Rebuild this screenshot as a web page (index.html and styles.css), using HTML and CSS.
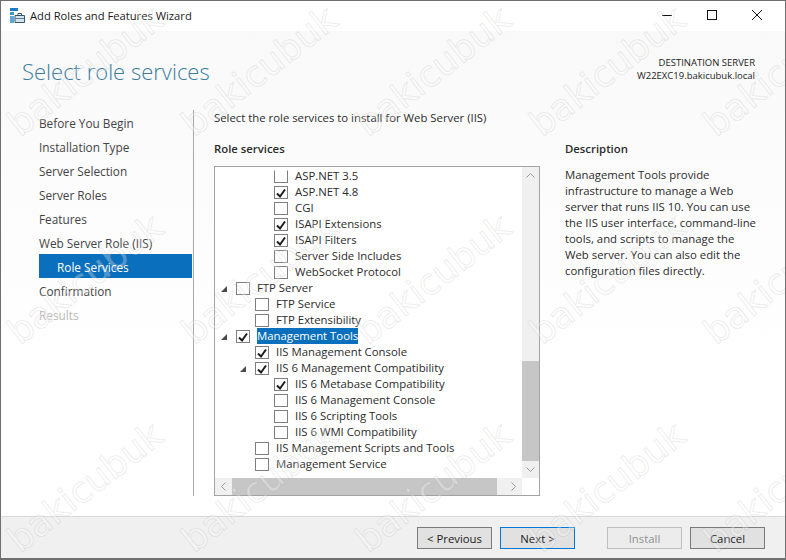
FILE: index.html
```html
<!DOCTYPE html>
<html lang="en">
<head>
<meta charset="utf-8">
<title>Add Roles and Features Wizard</title>
<link rel="stylesheet" href="styles.css">
</head>
<body>
<div class="window">
  <header class="titlebar">
    <svg class="app-icon" width="15" height="15" viewBox="0 0 15 15">
      <rect x="0" y="0" width="8" height="3" fill="#1b7cc4"/>
      <rect x="0" y="4" width="4" height="3" fill="#3f94d0"/>
      <rect x="0" y="8" width="4" height="7" fill="#5ea8da"/>
      <path d="M5 7.5h9.5v7H5z" fill="#d5e3ec" stroke="#35566c" stroke-width="1"/>
      <path d="M8 7.5v-2h3.5v2" fill="none" stroke="#35566c" stroke-width="1"/>
      <rect x="5" y="10" width="9" height="1" fill="#5d7d92"/>
    </svg>
    <span class="title-text">Add Roles and Features Wizard</span>
    <div class="controls">
      <svg width="12" height="12" viewBox="0 0 12 12"><path d="M1 6.5h10" stroke="#111" stroke-width="1"/></svg>
      <svg width="12" height="12" viewBox="0 0 12 12"><rect x="1.5" y="1.5" width="9" height="9" fill="none" stroke="#111"/></svg>
      <svg width="12" height="12" viewBox="0 0 12 12"><path d="M1 1l10 10M11 1L1 11" stroke="#111" stroke-width="1"/></svg>
    </div>
  </header>

  <div class="body">
    <div class="page-head">
      <h1 class="page-title">Select role services</h1>
      <div class="dest">
        <div>DESTINATION SERVER</div>
        <div>W22EXC19.bakicubuk.local</div>
      </div>
    </div>

    <div class="main">
      <nav class="nav">
        <div class="nav-item">Before You Begin</div>
        <div class="nav-item">Installation Type</div>
        <div class="nav-item">Server Selection</div>
        <div class="nav-item">Server Roles</div>
        <div class="nav-item">Features</div>
        <div class="nav-item">Web Server Role (IIS)</div>
        <div class="nav-item nav-active">Role Services</div>
        <div class="nav-item">Confirmation</div>
        <div class="nav-item nav-disabled">Results</div>
      </nav>

      <section class="content">
        <p class="intro">Select the role services to install for Web Server (IIS)</p>
        <div class="columns">
          <div class="services">
            <h2 class="label">Role services</h2>
            <div class="tree-box">
              <div class="tree">
                <div class="row l2"><span class="box cut"></span><span>ASP.NET 3.5</span></div>
                <div class="row l2"><span class="box"><svg class="tick" viewBox="0 0 12 12"><path d="M2 6.5l3 3 5-7"/></svg></span><span>ASP.NET 4.8</span></div>
                <div class="row l2"><span class="box"></span><span>CGI</span></div>
                <div class="row l2"><span class="box"><svg class="tick" viewBox="0 0 12 12"><path d="M2 6.5l3 3 5-7"/></svg></span><span>ISAPI Extensions</span></div>
                <div class="row l2"><span class="box"><svg class="tick" viewBox="0 0 12 12"><path d="M2 6.5l3 3 5-7"/></svg></span><span>ISAPI Filters</span></div>
                <div class="row l2"><span class="box"></span><span>Server Side Includes</span></div>
                <div class="row l2"><span class="box"></span><span>WebSocket Protocol</span></div>
                <div class="row l0"><svg class="arrow" viewBox="0 0 6 6"><path d="M0 6h6V0z"/></svg><span class="box"></span><span>FTP Server</span></div>
                <div class="row l1"><span class="box"></span><span>FTP Service</span></div>
                <div class="row l1"><span class="box"></span><span>FTP Extensibility</span></div>
                <div class="row l0"><svg class="arrow" viewBox="0 0 6 6"><path d="M0 6h6V0z"/></svg><span class="box"><svg class="tick" viewBox="0 0 12 12"><path d="M2 6.5l3 3 5-7"/></svg></span><span class="selected">Management Tools</span></div>
                <div class="row l1"><span class="box"><svg class="tick" viewBox="0 0 12 12"><path d="M2 6.5l3 3 5-7"/></svg></span><span>IIS Management Console</span></div>
                <div class="row l1 has-arrow"><svg class="arrow" viewBox="0 0 6 6"><path d="M0 6h6V0z"/></svg><span class="box"><svg class="tick" viewBox="0 0 12 12"><path d="M2 6.5l3 3 5-7"/></svg></span><span>IIS 6 Management Compatibility</span></div>
                <div class="row l2"><span class="box"><svg class="tick" viewBox="0 0 12 12"><path d="M2 6.5l3 3 5-7"/></svg></span><span>IIS 6 Metabase Compatibility</span></div>
                <div class="row l2"><span class="box"></span><span>IIS 6 Management Console</span></div>
                <div class="row l2"><span class="box"></span><span>IIS 6 Scripting Tools</span></div>
                <div class="row l2"><span class="box"></span><span>IIS 6 WMI Compatibility</span></div>
                <div class="row l1"><span class="box"></span><span>IIS Management Scripts and Tools</span></div>
                <div class="row l1"><span class="box"></span><span>Management Service</span></div>
              </div>
              <div class="vscroll">
                <svg class="chev" viewBox="0 0 17 17"><path d="M4.5 10.5l4-4 4 4"/></svg>
                <div class="vtrack"><div class="vthumb"></div></div>
                <svg class="chev" viewBox="0 0 17 17"><path d="M4.5 6.5l4 4 4-4"/></svg>
              </div>
              <div class="hscroll">
                <svg class="chev" viewBox="0 0 17 17"><path d="M10.5 4.5l-4 4 4 4"/></svg>
                <div class="htrack"><div class="hthumb"></div></div>
                <svg class="chev" viewBox="0 0 17 17"><path d="M6.5 4.5l4 4-4 4"/></svg>
              </div>
              <div class="corner"></div>
            </div>
          </div>
          <aside class="description">
            <h2 class="label">Description</h2>
            <p class="desc-text">Management Tools provide<br>infrastructure to manage a Web<br>server that runs IIS 10. You can use<br>the IIS user interface, command-line<br>tools, and scripts to manage the<br>Web server. You can also edit the<br>configuration files directly.</p>
          </aside>
        </div>
      </section>
    </div>
  </div>

  <footer class="footer">
    <button class="btn">&lt; Previous</button>
    <button class="btn btn-default">Next &gt;</button>
    <button class="btn btn-disabled btn-gap">Install</button>
    <button class="btn">Cancel</button>
  </footer>

  <div class="watermarks" aria-hidden="true">
    <span>bakicubuk</span><span>bakicubuk</span><span>bakicubuk</span><span>bakicubuk</span><span>bakicubuk</span>
    <span>bakicubuk</span><span>bakicubuk</span><span>bakicubuk</span><span>bakicubuk</span><span>bakicubuk</span>
    <span>bakicubuk</span><span>bakicubuk</span><span>bakicubuk</span><span>bakicubuk</span><span>bakicubuk</span>
  </div>
</div>
</body>
</html>
```
FILE: styles.css
```css
* { box-sizing: border-box; }
html, body { margin: 0; padding: 0; }
body {
  width: 786px;
  height: 560px;
  overflow: hidden;
  font-family: "Open Sans", "Noto Sans", sans-serif;
  font-size: 11.35px;
  color: #2b2b2b;
  background: #fff;
}
.window {
  position: relative;
  width: 786px;
  height: 560px;
  display: flex;
  flex-direction: column;
  overflow: hidden;
  border: 1px solid #6f6f6f;
  border-bottom-width: 2px;
}
.titlebar {
  height: 30px;
  flex: none;
  display: flex;
  align-items: center;
  padding: 0 0 2px 9px;
  background: #fff;
}
.app-icon { margin-right: 5px; }
.title-text { color: #1a1a1a; font-size: 11.2px; }
.controls {
  margin-left: auto;
  display: flex;
  gap: 33px;
  padding-right: 22px;
}
.body {
  flex: 1;
  display: flex;
  flex-direction: column;
  min-height: 0;
  background: linear-gradient(#f9f9f9, #ffffff 70%);
}
.page-head {
  height: 79px;
  flex: none;
  display: flex;
  justify-content: space-between;
  padding: 25px 30px 0 21px;
}
.page-title {
  margin: 0;
  font-size: 22px;
  line-height: 30px;
  font-weight: 300;
  color: #3b7c9f;
}
.dest {
  text-align: right;
  font-size: 9.5px;
  line-height: 13px;
  color: #222;
}
.main { flex: 1; display: flex; min-height: 0; padding-bottom: 20px; }
.nav {
  width: 193px;
  flex: none;
  padding: 0 1px 0 38px;
  border-right: 1px solid #a8a8a8;
}
.nav-item {
  height: 24px;
  line-height: 26px;
  color: #444;
  font-size: 11.8px;
}
.nav-active {
  background: #0a6fbd;
  color: #fff;
  padding-left: 18px;
}
.nav-disabled { color: #b9b9b9; }
.content { flex: 1; padding: 0 0 0 20px; min-width: 0; }
.intro { margin: 0; height: 16px; line-height: 16px; }
.columns { display: flex; margin-top: 15px; }
.services { width: 326px; flex: none; }
.label {
  margin: 0;
  height: 25px;
  line-height: 16px;
  font-size: 11.35px;
  font-weight: 600;
  color: #2b2b2b;
}
.tree-box {
  position: relative;
  width: 326px;
  height: 330px;
  border: 1px solid #a3a3a3;
  background: #fff;
  display: grid;
  grid-template-columns: 307px 17px;
  grid-template-rows: 311px 17px;
  overflow: hidden;
}
.tree { padding-top: 1px; overflow: hidden; }
.row {
  height: 16px;
  display: flex;
  align-items: center;
  line-height: 16px;
  white-space: nowrap;
}
.l0 { padding-left: 6px; }
.l1 { padding-left: 40px; }
.l1.has-arrow { padding-left: 25px; }
.l2 { padding-left: 59px; }
.arrow { width: 6px; height: 6px; margin: 1px 9px 0 0; fill: #4a4a4a; flex: none; }
.box {
  width: 14px;
  height: 13px;
  flex: none;
  margin: 1px 7px 0 0;
  border: 1px solid #7f7f7f;
  background: #fff;
  display: flex;
  align-items: center;
  justify-content: center;
}
.cut { border-top-color: transparent; }
.tick { width: 12px; height: 12px; fill: none; stroke: #1c1c1c; stroke-width: 2; }
.selected {
  background: #0a6fbd;
  color: #fff;
  height: 16px;
}
.vscroll {
  background: #f0f0f0;
  display: flex;
  flex-direction: column;
}
.vtrack { flex: 1; padding-top: 177px; }
.vthumb { height: 100px; background: #c6c6c6; }
.hscroll { background: #f0f0f0; display: flex; }
.htrack { flex: 1; }
.hthumb { width: 265px; height: 17px; background: #c6c6c6; }
.corner { background: #fff; }
.chev { width: 17px; height: 17px; flex: none; fill: none; stroke: #9a9a9a; stroke-width: 1; }
.description { margin-left: 25px; width: 200px; }
.desc-text { margin: 0; padding-top: 1px; line-height: 16px; white-space: nowrap; }
.footer {
  height: 42px;
  flex: none;
  display: flex;
  align-items: flex-start;
  padding: 10px 0 0 416px;
  gap: 8px;
  background: #f0f0f0;
  border-top: 1px solid #d9d9d9;
}
.btn {
  width: 75px;
  height: 22px;
  padding: 0;
  font: inherit;
  font-size: 11.35px;
  color: #222;
  background: #e1e1e1;
  border: 1px solid #7a7a7a;
}
.btn-default { border-color: #0078d7; }
.btn-disabled { color: #8f8f8f; background: #ececec; border-color: #bfbfbf; }
.btn-gap { margin-left: 24px; }
.watermarks {
  position: absolute;
  left: 0;
  top: 0;
  width: 870px;
  display: grid;
  grid-template-columns: repeat(5, 174px);
  grid-auto-rows: 208px;
  pointer-events: none;
  transform: translate(27px, 97px);
}
.watermarks span {
  display: block;
  width: 200px;
  height: 50px;
  font-family: "DejaVu Sans", sans-serif;
  font-size: 36px;
  line-height: 50px;
  white-space: nowrap;
  color: rgba(255,255,255,0.3);
  -webkit-text-stroke: 1px rgba(150,150,150,0.18);
  transform: rotate(-38deg);
  transform-origin: 0 100%;
}
```
